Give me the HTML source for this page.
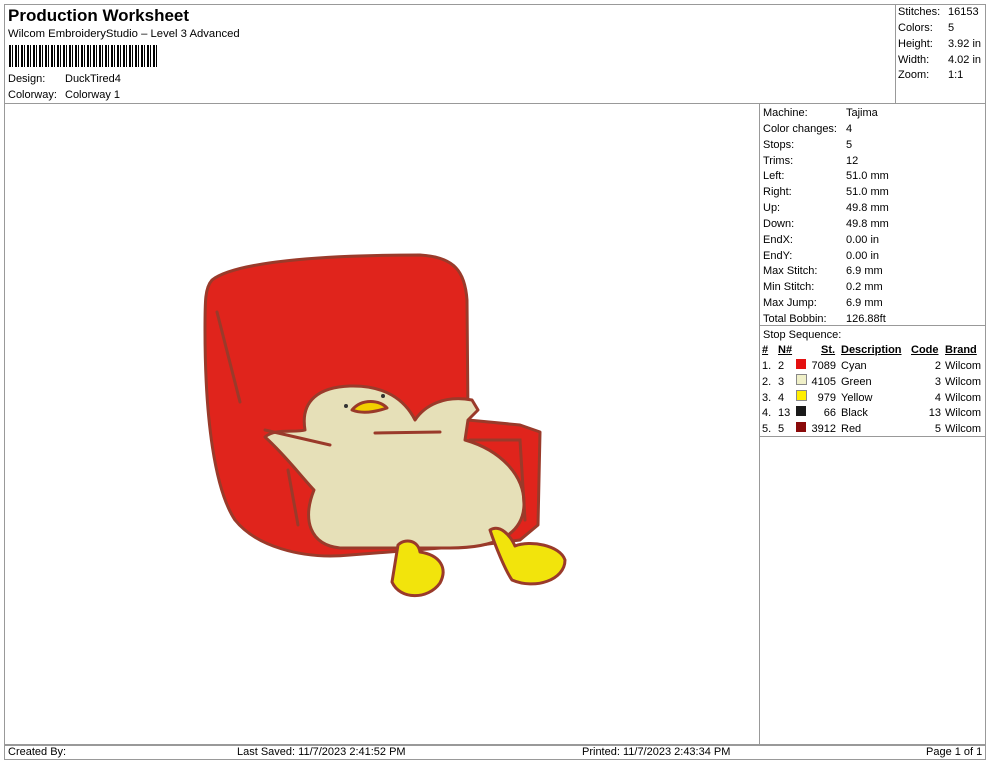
<!DOCTYPE html>
<html><head><meta charset="utf-8"><style>
body{margin:0;width:990px;height:762px;background:#fff;font-family:"Liberation Sans",sans-serif;color:#000;position:relative;overflow:hidden}
.a{position:absolute;white-space:nowrap;font-size:11px;line-height:13px}
.l{position:absolute;background:#999}
</style></head><body>
<div class="l" style="left:4px;top:4px;width:982px;height:1px"></div>
<div class="l" style="left:4px;top:4px;width:1px;height:756px"></div>
<div class="l" style="left:985px;top:4px;width:1px;height:756px"></div>
<div class="l" style="left:4px;top:759px;width:982px;height:1px"></div>
<div class="l" style="left:4px;top:103px;width:982px;height:1px"></div>
<div class="l" style="left:895px;top:4px;width:1px;height:100px"></div>
<div class="l" style="left:759px;top:103px;width:1px;height:641px"></div>
<div class="l" style="left:4px;top:744px;width:982px;height:2px"></div>
<div class="l" style="left:759px;top:325px;width:227px;height:1px"></div>
<div class="l" style="left:759px;top:436px;width:227px;height:1px"></div>

<div class="a" style="left:8px;top:6px;font-size:17px;line-height:20px;font-weight:bold">Production Worksheet</div>
<div class="a" style="left:8px;top:28px;font-size:11.3px">Wilcom EmbroideryStudio – Level 3 Advanced</div>
<div style="position:absolute;left:9px;top:45px;width:149px;height:22px;background:repeating-linear-gradient(90deg,#000 0 2px,#fff 2px 3px,#000 3px 4px,#fff 4px 6px)"></div>
<div class="a" style="left:8px;top:73px">Design:</div><div class="a" style="left:65px;top:73px">DuckTired4</div>
<div class="a" style="left:8px;top:89px">Colorway:</div><div class="a" style="left:65px;top:89px">Colorway 1</div>

<div class="a" style="left:898px;top:6px">Stitches:</div><div class="a" style="left:948px;top:6px">16153</div>
<div class="a" style="left:898px;top:22px">Colors:</div><div class="a" style="left:948px;top:22px">5</div>
<div class="a" style="left:898px;top:38px">Height:</div><div class="a" style="left:948px;top:38px">3.92 in</div>
<div class="a" style="left:898px;top:54px">Width:</div><div class="a" style="left:948px;top:54px">4.02 in</div>
<div class="a" style="left:898px;top:69px">Zoom:</div><div class="a" style="left:948px;top:69px">1:1</div>

<div class="a" style="left:763px;top:106px;line-height:15.85px">Machine:<br>Color changes:<br>Stops:<br>Trims:<br>Left:<br>Right:<br>Up:<br>Down:<br>EndX:<br>EndY:<br>Max Stitch:<br>Min Stitch:<br>Max Jump:<br>Total Bobbin:<br>Stop Sequence:</div>
<div class="a" style="left:846px;top:106px;line-height:15.85px">Tajima<br>4<br>5<br>12<br>51.0 mm<br>51.0 mm<br>49.8 mm<br>49.8 mm<br>0.00 in<br>0.00 in<br>6.9 mm<br>0.2 mm<br>6.9 mm<br>126.88ft</div>

<div class="a" style="left:762px;top:344px;font-weight:bold;text-decoration:underline">#</div>
<div class="a" style="left:778px;top:344px;font-weight:bold;text-decoration:underline">N#</div>
<div class="a" style="left:821px;top:344px;font-weight:bold;text-decoration:underline">St.</div>
<div class="a" style="left:841px;top:344px;font-weight:bold;text-decoration:underline">Description</div>
<div class="a" style="left:911px;top:344px;font-weight:bold;text-decoration:underline">Code</div>
<div class="a" style="left:945px;top:344px;font-weight:bold;text-decoration:underline">Brand</div>

<div class="a" style="left:762px;top:359px;line-height:15.8px">1.<br>2.<br>3.<br>4.<br>5.</div>
<div class="a" style="left:778px;top:359px;line-height:15.8px">2<br>3<br>4<br>13<br>5</div>
<div style="position:absolute;left:796px;top:359px;width:10px;height:10px;background:#e41010"></div>
<div style="position:absolute;left:796px;top:374px;width:9px;height:9px;background:#f0f0c8;border:1px solid #888"></div>
<div style="position:absolute;left:796px;top:390px;width:9px;height:9px;background:#ffee00;border:1px solid #888"></div>
<div style="position:absolute;left:796px;top:406px;width:10px;height:10px;background:#1a1a1a"></div>
<div style="position:absolute;left:796px;top:422px;width:10px;height:10px;background:#8a0a0a"></div>
<div class="a" style="left:808px;width:28px;text-align:right;top:359px;line-height:15.8px">7089<br>4105<br>979<br>66<br>3912</div>
<div class="a" style="left:841px;top:359px;line-height:15.8px">Cyan<br>Green<br>Yellow<br>Black<br>Red</div>
<div class="a" style="left:910px;width:31px;text-align:right;top:359px;line-height:15.8px">2<br>3<br>4<br>13<br>5</div>
<div class="a" style="left:945px;top:359px;line-height:15.8px">Wilcom<br>Wilcom<br>Wilcom<br>Wilcom<br>Wilcom</div>

<div class="a" style="left:8px;top:746px">Created By:</div>
<div class="a" style="left:237px;top:746px">Last Saved: 11/7/2023 2:41:52 PM</div>
<div class="a" style="left:582px;top:746px">Printed: 11/7/2023 2:43:34 PM</div>
<div class="a" style="left:926px;top:746px">Page 1 of 1</div>

<svg style="position:absolute;left:0;top:0" width="990" height="762">
<g stroke="#9a3a2a" stroke-width="3" stroke-linejoin="round" stroke-linecap="round">
<path d="M212 280 C235 262 320 255 420 255 C455 257 465 272 467 300 L468 420 L520 425 L540 432 L538 525 L520 540 L480 545 L350 555 C300 560 255 545 235 520 C215 490 205 420 205 330 C205 300 205 288 212 280 Z" fill="#e0241c"/>
<path d="M305 430 C300 400 320 387 350 386 C385 385 405 400 415 420 C425 405 445 395 472 400 L478 410 L468 420 L465 440 C500 450 525 475 524 505 C523 535 495 548 450 548 L340 548 C310 545 302 520 314 490 C300 475 285 455 265 437 C275 428 295 433 305 430 Z" fill="#e6e0b8"/>
<path d="M398 545 C405 538 418 540 420 552 C440 555 448 568 440 583 C428 600 400 600 392 582 Z" fill="#f2e40c"/>
<path d="M490 530 C500 524 510 535 515 546 C530 540 560 545 565 560 C565 580 535 590 512 580 C505 570 495 545 490 530 Z" fill="#f2e40c"/>
<path d="M352 410 C362 398 380 400 387 408 C375 412 362 414 352 410 Z" fill="#f2d000"/>
</g>
<g stroke="#9a3a2a" stroke-width="3" fill="none" stroke-linecap="round">
<path d="M217 312 L240 402"/><path d="M288 470 L298 525"/><path d="M375 433 L440 432"/><path d="M265 430 L330 445"/><path d="M470 440 L520 440 L525 520"/>
</g>
<circle cx="346" cy="406" r="2" fill="#333"/><circle cx="383" cy="396" r="2" fill="#333"/>
</svg>
</body></html>
